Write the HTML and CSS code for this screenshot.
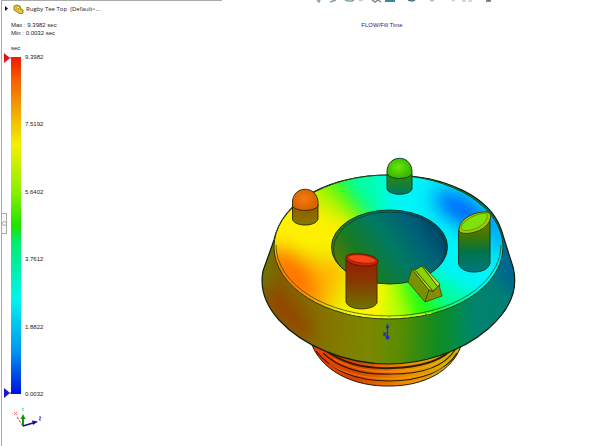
FILE: index.html
```html
<!DOCTYPE html>
<html lang="en">
<head>
<meta charset="utf-8">
<title>FLOW/Fill Time</title>
<link rel="stylesheet" href="styles.css">
</head>
<body>
<main class="viewport">
  <div class="edge"><button class="handle" type="button" aria-label="Toggle panel"></button></div>
  <aside class="panel">
    <button class="tree" type="button">
      <svg class="tree-icons" viewBox="0 0 20 10" aria-hidden="true">
        <path d="M1 2L4 4.500L1 7z" fill="#111"/>
        <path d="M10 2l3-1 3 1 1 3 2 1v3l-3 1-3-2-3-2z" fill="#eac42d" stroke="#8b6810" stroke-width=".8"/>
        <path d="M12 4l2-2 2 1-2 2zM14 7l1-2 2 1" fill="#fff3a0" stroke="#a77d16" stroke-width=".6"/>
      </svg>
      <span>Rugby Tee Top&nbsp; (Default&lt;...</span>
    </button>
    <div class="range"><div>Max : 9.3982 sec</div><div>Min : 0.0032 sec</div></div>
    <div class="unit">sec</div>
    <section class="legend" aria-label="Fill time scale">
      <div class="markers">
        <svg viewBox="0 0 9 10" aria-hidden="true"><path d="M1 0L7 5L1 10z" fill="#e5101b"/><path d="M5 5h4" stroke="#c44"/></svg>
        <svg viewBox="0 0 9 10" aria-hidden="true"><path d="M1 0L7 5L1 10z" fill="#1018c8"/><path d="M5 5h4" stroke="#44a"/></svg>
      </div>
      <div class="bar"></div>
      <ol class="values"><li>9.3982</li><li>7.5192</li><li>5.6402</li><li>3.7612</li><li>1.8822</li><li>0.0032</li></ol>
    </section>
    <svg class="triad" viewBox="0 0 34 28" aria-label="Axes">
      <path d="M13 21L7 12" stroke="#e88" stroke-width="1.500" stroke-dasharray="3 1"/>
      <path d="M4 7l3 3M7 7l-3 3" stroke="#f08080"/>
      <path d="M13 21V12" stroke="#0a980a" stroke-width="2"/><path d="M10.500 14L13 9l2.500 5z" fill="#0a980a"/>
      <path d="M12 3l1 1.500 1-1.500M13 4.500V6" stroke="#80dc80" fill="none"/>
      <path d="M13 21L23 18" stroke="#1010a0" stroke-width="1.600"/><path d="M22 15.500l6 1-5 3.500z" fill="#1010a0"/>
      <path d="M29 12h2l-2 3h2" stroke="#4848d0" fill="none"/>
    </svg>
  </aside>
  <section class="stage">
    <svg class="tools" viewBox="222 0 380 5" aria-hidden="true">
      <g fill="none" stroke="#7fa2ad" stroke-width="1.500">
        <path d="M317 0l2 2 1-2M330 2l3-1 3-1M345 0l3 1 4 0 2-1"/>
        <path d="M359 1l4-1" stroke="#ccc"/><path d="M372 0l3 2 3-2 3 2" stroke="#888"/>
        <path d="M386 0v1h8V0" stroke="#3c8798" stroke-width="2"/>
        <path d="M408 0l4 1 3-1" stroke="#50717d"/><path d="M430 0l2 1 2-1" stroke="#bbb"/>
        <path d="M452 1l3-1M462 1h4M468 1h4" stroke="#ccc"/><path d="M486 1h5M488.500 0v1" stroke="#666"/>
      </g>
    </svg>
    <h1 class="title">FLOW/Fill Time</h1>
    <svg class="model" viewBox="222 34 380 412" role="img" aria-label="Rugby tee coloured by fill time">
      <defs>
        <clipPath id="bodyClip"><path id="bodyShape" d="M274 240C283 200 329 175 390 175C447 175 490 198 501 229L513 267C519 290 510 310 488 329C460 353 421 364 389 364C344 364 302 345 279 320C264 303 260 286 263 271Z"/></clipPath>
        <clipPath id="faceClip"><ellipse cx="388.500" cy="247" rx="114.500" ry="72"/></clipPath>
        <clipPath id="holeClip"><ellipse cx="389.500" cy="247" rx="58" ry="37"/></clipPath>
        <filter id="soft" x="-50%" y="-50%" width="200%" height="200%" color-interpolation-filters="sRGB"><feGaussianBlur stdDeviation="9"/></filter>
        <filter id="mid" x="-60%" y="-100%" width="220%" height="300%" color-interpolation-filters="sRGB"><feGaussianBlur stdDeviation="10"/></filter>
        <linearGradient id="bodyFill" gradientUnits="userSpaceOnUse" x1="262" x2="516" y1="0" y2="12">
          <stop offset="0" stop-color="#776800"/><stop offset=".12" stop-color="#875c00"/><stop offset=".3" stop-color="#857300"/><stop offset=".48" stop-color="#7c8800"/><stop offset=".6" stop-color="#5c8c00"/><stop offset=".75" stop-color="#108c20"/><stop offset=".86" stop-color="#008b58"/><stop offset="1" stop-color="#00758c"/>
        </linearGradient>
        <linearGradient id="threadFill"><stop offset="0" stop-color="#f83b08"/><stop offset=".3" stop-color="#d74600"/><stop offset=".62" stop-color="#ef8900"/><stop offset="1" stop-color="#c8c000"/></linearGradient>
        <linearGradient id="holeFill" x1="0" y1=".7" x2="1" y2=".25"><stop offset="0" stop-color="#687900"/><stop offset=".25" stop-color="#187c20"/><stop offset=".5" stop-color="#007c62"/><stop offset=".75" stop-color="#006179"/><stop offset="1" stop-color="#003860"/></linearGradient>
        <linearGradient id="redPost" x1="0" y1="0" x2="0" y2="1"><stop offset="0" stop-color="#9a1a00"/><stop offset=".45" stop-color="#8a3900"/><stop offset="1" stop-color="#6e7600"/></linearGradient>
        <linearGradient id="bluePost" x1="0" y1="0" x2="0" y2="1"><stop offset="0" stop-color="#778000"/><stop offset=".38" stop-color="#407800"/><stop offset=".65" stop-color="#007447"/><stop offset="1" stop-color="#007984"/></linearGradient>
        <linearGradient id="greenPost" x1="0" y1="0" x2="0" y2="1"><stop offset="0" stop-color="#318900"/><stop offset="1" stop-color="#007866"/></linearGradient>
        <linearGradient id="orangePost" x1="0" y1="0" x2="0" y2="1"><stop offset="0" stop-color="#9c5100"/><stop offset="1" stop-color="#817e00"/></linearGradient>
        <radialGradient id="orangeDome" cx=".45" cy=".45"><stop offset="0" stop-color="#f47a10"/><stop offset="1" stop-color="#d86400"/></radialGradient>
        <radialGradient id="greenDome" cx=".45" cy=".45"><stop offset="0" stop-color="#68e808"/><stop offset="1" stop-color="#3cb800"/></radialGradient>
        <pattern id="mesh" width="5" height="5" patternUnits="userSpaceOnUse"><path d="M0 0l5 5M5 0L0 5" stroke="#002828" stroke-opacity=".08" stroke-width=".5"/></pattern>
      </defs>
      <path d="M311 342C320 370 353 387 390 386C424 386 452 371 461 346Z" fill="url(#threadFill)" stroke="#29150a" stroke-width="1"/>
      <g fill="none" stroke="#351a00" stroke-width="1.200">
        <path d="M316 351C334 374 361 381 389 381C421 381 446 371 457 353"/>
        <path d="M323 353C342 371 370 375 393 374C424 374 445 365 455 350"/>
        <path d="M325 350C345 365 370 369 393 368C423 367 440 360 450 351" stroke-width="2"/>
      </g>
      <g fill="none" stroke="#ffae12" stroke-width=".8" opacity=".65"><path d="M329 364C356 382 415 384 444 367M334 359C362 376 410 375 443 361"/></g>
      <g clip-path="url(#bodyClip)">
        <path d="M255 165H525V370H255z" fill="url(#bodyFill)"/>
        <g filter="url(#soft)"><ellipse cx="289" cy="313" rx="34" ry="8" fill="#983c00" transform="rotate(46 289 313)"/><path d="M255 235h15v50h-15z" fill="#688000"/><path d="M466 290l50-20v50l-40 20z" fill="#008270"/><path d="M503 230h20v60h-20z" fill="#006090"/></g>
      </g>
      <use href="#bodyShape" fill="none" stroke="#10200c" stroke-width="1.200"/>
      <g clip-path="url(#faceClip)">
        <path d="M260 165H520V330H260z" fill="#e8f000"/>
        <g filter="url(#soft)">
          <path d="M389 247L360 120H580V320L469 330z" fill="#00f4f8"/>
          <path d="M389 247L302 120L380 120z" fill="#00ffb0"/>
          <path d="M389 247L262 120L304 120z" fill="#30fa10"/>
          <path d="M389 247L210 145L210 110L264 120z" fill="#b8f400"/>
          <path d="M389 247L210 145L220 256z" fill="#fff000"/>
          <path d="M350 262L220 252L230 315L312 345z" fill="#ffba00"/>
          <path d="M389 247L322 350L390 350z" fill="#fff500"/>
          <path d="M389 247L384 350L428 350z" fill="#b8ff00"/>
          <path d="M389 247L424 350L472 340z" fill="#20fa10"/>
          <path d="M389 247L468 340L498 310z" fill="#00ffa0"/>
        </g>
        <g filter="url(#mid)"><ellipse cx="293" cy="275" rx="34" ry="13" fill="#ff6800" transform="rotate(48 293 275)"/><ellipse cx="462" cy="210" rx="32" ry="13" fill="#0058ff" transform="rotate(32 462 210)"/><ellipse cx="501" cy="232" rx="7" ry="26" fill="#0080f0"/></g>
      </g>
      <g fill="none" stroke="#243c13">
        <ellipse cx="388.500" cy="247" rx="114.500" ry="72" stroke-width="1"/>
        <path d="M276 245A112.500 71 0 0 0 501 245" stroke-width=".7"/>
        <path d="M347 313C372 319 407 319 435 312" stroke="#efff22" stroke-width="1.200" stroke-dasharray="12 2 5 3"/>
      </g>
      <g clip-path="url(#holeClip)">
        <path d="M330 209h120v77H330z" fill="url(#holeFill)"/><path d="M330 209h120v77H330z" fill="url(#mesh)"/>
        <ellipse cx="389.500" cy="249" rx="56" ry="37" fill="none" stroke="#12372c" stroke-width=".7"/>
      </g>
      <ellipse cx="389.500" cy="247" rx="58" ry="37" fill="none" stroke="#153823" stroke-width="1"/>
      <g stroke="#2b2705" stroke-width=".9">
        <path d="M292.500 204V219C294 227 316 227 318 219V204z" fill="url(#orangePost)"/><path d="M292.500 206V202C293 185 317 185 318 202V206C314 212 296 212 292.500 206z" fill="url(#orangeDome)"/>
      </g>
      <g stroke="#063719" stroke-width=".9">
        <path d="M387 174V189C389 196 410 196 412 189V174z" fill="url(#greenPost)"/><path d="M387 174V171C388 154 411 154 412 171V174C408 180 391 180 387 174z" fill="url(#greenDome)"/>
      </g>
      <path d="M458.500 230V263C460 275 488 275 490 263V214z" fill="url(#bluePost)" stroke="#103a25"/>
      <path d="M458.500 230V263C460 275 488 275 490 263V214z" fill="url(#mesh)"/>
      <path d="M459 228C461 217 477 211 487 212C493 213 491 221 486 226C479 233 462 236 459 231z" fill="#a2c800" stroke="#304b00"/>
      <path d="M461 227C464 219 478 213 486 213C490 217 484 225 477 228C470 231 461 232 461 227z" fill="#80e20b" stroke="#527a00" stroke-width=".7"/>
      <path d="M346 259V302C349 311 373 311 377 303V261z" fill="url(#redPost)" stroke="#453300"/>
      <path d="M346 259V302C349 311 373 311 377 303V261z" fill="url(#mesh)"/>
      <path d="M346 258C345 252 366 253 374 257C382 262 376 266 367 266C358 266 347 264 346 258z" fill="#c82600" stroke="#651500"/>
      <ellipse cx="362" cy="259" rx="14" ry="4" fill="#f8401b" stroke="#7d1b00" stroke-width=".6" transform="rotate(7 362 259)"/>
      <g stroke="#3b4500" stroke-width=".8" stroke-linejoin="round">
        <path d="M412 269L408 282L425 302L429 290z" fill="#779300"/>
        <path d="M412 269L415 270L433 291L429 290z" fill="#c8d711"/>
        <path d="M415 270L422 266L438 287L433 291z" fill="#88d400"/>
        <path d="M422 266L424 267L440 284L438 287z" fill="#c7e020"/>
        <path d="M425 302L429 290L433 292L439 285L442 296z" fill="#858d00"/>
      </g>
      <g fill="none" stroke="#2430b0" stroke-width="1.200"><path d="M387.500 338V327M387 337l-3-4M384 336v-3h3"/><path d="M386 328l1.500-4 1.500 4zM386 336h3v3h-3z" fill="#2430b0" stroke-width=".6"/></g>
    </svg>
  </section>
</main>
</body>
</html>
```
FILE: styles.css
```css
* { box-sizing: border-box; }
body { margin: 0; background: #fff; color: #222; font: 6px/8px "Liberation Sans", sans-serif; }
button { font: inherit; color: inherit; }
.viewport { display: grid; grid-template-columns: 6px 216px minmax(0, 1fr); min-height: 100vh; }
.edge { display: flex; align-items: center; margin-left: 1px; border-left: 1px solid #aaa; border-top: 1px solid #aaa; }
.handle { flex: none; width: 5px; height: 21px; padding: 0; border: 1px solid #aaa; border-left: 0; background: #f8f8f8; }
.handle::before { content: ""; display: block; width: 3px; height: 3px; border: 1px solid #aaa; border-radius: 50%; }
.panel { display: flex; flex-direction: column; border-top: 1px solid #aaa; }
.tree { display: flex; align-items: center; align-self: start; height: 16px; margin: 0; padding: 0; border: 0; background: none; font: 6px/10px "Open Sans", sans-serif; }
.tree-icons { width: 20px; height: 10px; margin-left: -2px; margin-right: 2px; }
.range, .unit { padding-left: 5px; }
.range { margin-top: 4px; }
.unit { margin-top: 7px; }
.legend { display: flex; flex: 1; min-height: 120px; margin-top: 1px; }
.markers { display: flex; flex-direction: column; justify-content: space-between; width: 5px; margin-left: -3px; }
.markers svg { flex: none; width: 9px; height: 10px; }
.bar { width: 10px; margin: 4px 4px 4px 3px; background: linear-gradient(#f01a00, #f66100 7%, #f0a800 16%, #f4f000 26%, #88f000 40%, #20e400 50%, #00ed70 55%, #00f4f0 72%, #0098f0 87%, #0010e0); }
.values { display: flex; flex-direction: column; justify-content: space-between; margin: 0; padding: 0; list-style: none; }
.triad { width: 34px; height: 28px; margin: 7px 0 13px 4px; }
.stage { display: flex; flex-direction: column; min-width: 0; }
.tools, .model { display: block; width: 100%; }
.title { margin: 16px 0 5px; padding-right: 60px; color: #282080; font: 6px/8px "Liberation Sans", sans-serif; text-align: center; }
```
